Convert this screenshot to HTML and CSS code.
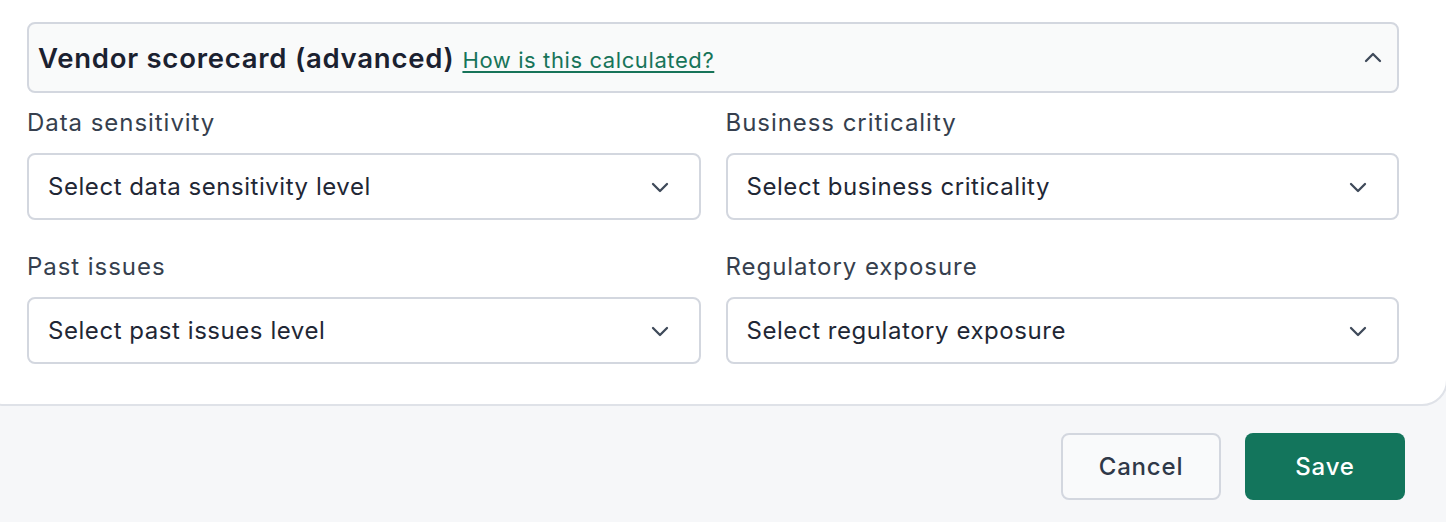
FILE: index.html
```html
<!DOCTYPE html>
<html lang="en">
<head>
<meta charset="utf-8">
<title>Vendor scorecard</title>
<link rel="stylesheet" href="styles.css">
</head>
<body>
<div class="page">
  <section class="card">
    <div class="accordion">
      <div class="acc-title">
        <span class="acc-heading">Vendor scorecard (advanced)</span>
        <a class="acc-link" href="#">How is this calculated?</a>
      </div>
      <svg class="chev" width="24" height="24" viewBox="0 0 24 24" fill="none" stroke="#3f4a5a" stroke-width="2.3" stroke-linecap="round" stroke-linejoin="round"><path d="M5 15l7-7 7 7"/></svg>
    </div>
    <div class="grid">
      <div class="field">
        <label class="label">Data sensitivity</label>
        <div class="select"><span>Select data sensitivity level</span>
          <svg class="chev" width="24" height="24" viewBox="0 0 24 24" fill="none" stroke="#3f4a5a" stroke-width="2.3" stroke-linecap="round" stroke-linejoin="round"><path d="M5 9l7 7 7-7"/></svg></div>
      </div>
      <div class="field">
        <label class="label">Business criticality</label>
        <div class="select"><span>Select business criticality</span>
          <svg class="chev" width="24" height="24" viewBox="0 0 24 24" fill="none" stroke="#3f4a5a" stroke-width="2.3" stroke-linecap="round" stroke-linejoin="round"><path d="M5 9l7 7 7-7"/></svg></div>
      </div>
      <div class="field">
        <label class="label">Past issues</label>
        <div class="select"><span>Select past issues level</span>
          <svg class="chev" width="24" height="24" viewBox="0 0 24 24" fill="none" stroke="#3f4a5a" stroke-width="2.3" stroke-linecap="round" stroke-linejoin="round"><path d="M5 9l7 7 7-7"/></svg></div>
      </div>
      <div class="field">
        <label class="label">Regulatory exposure</label>
        <div class="select"><span>Select regulatory exposure</span>
          <svg class="chev" width="24" height="24" viewBox="0 0 24 24" fill="none" stroke="#3f4a5a" stroke-width="2.3" stroke-linecap="round" stroke-linejoin="round"><path d="M5 9l7 7 7-7"/></svg></div>
      </div>
    </div>
  </section>
  <footer class="footer">
    <button class="btn btn-cancel">Cancel</button>
    <button class="btn btn-save">Save</button>
  </footer>
</div>
</body>
</html>
```
FILE: styles.css
```css
* { box-sizing: border-box; }
html, body { margin: 0; padding: 0; }
body {
  background: #f6f7f9;
  font-family: Inter, "Noto Sans", sans-serif;
  width: 1446px;
  height: 522px;
  overflow: hidden;
}
.page { width: 1446px; overflow: hidden; height: 522px; }
.card {
  background: #ffffff;
  border: 2px solid #dfe2e8;
  border-radius: 26px;
  margin: -40px 0 0 -22px;
  width: 1470px;
  padding: 60px 47px 40px 47px;
}
.accordion {
  height: 71px;
  background: #f9fafa;
  border: 2px solid #d3d7df;
  border-radius: 8px;
  display: flex;
  align-items: center;
  justify-content: space-between;
  padding: 0 12px 0 9px;
}
.acc-title { display: flex; align-items: baseline; gap: 8px; }
.acc-heading { font-size: 27.5px; font-weight: 600; color: #1b2130; letter-spacing: 0.75px; }
.acc-link { font-size: 22px; color: #177459; letter-spacing: 0.6px; text-decoration: underline; text-underline-offset: 3px; text-decoration-thickness: 1.5px; }
.grid {
  display: grid;
  grid-template-columns: 1fr 1fr;
  column-gap: 25px;
  row-gap: 29px;
  margin-top: 12px;
}
.field { display: flex; flex-direction: column; gap: 12px; }
.label { font-size: 24px; color: #363f4e; line-height: 36px; letter-spacing: 0.95px; }
.select {
  height: 67px;
  border: 2px solid #d3d7df;
  border-radius: 8px;
  background: #fff;
  display: flex;
  align-items: center;
  justify-content: space-between;
  padding: 0 27px 0 19px;
  font-size: 24px;
  letter-spacing: 0.55px;
  color: #1f2735;
}
.footer {
  display: flex;
  justify-content: flex-end;
  gap: 24px;
  padding: 27px 41px 0 0;
}
.btn {
  width: 160px;
  height: 67px;
  border-radius: 8px;
  font-family: Inter, "Noto Sans", sans-serif;
  font-size: 24px;
  font-weight: 500;
  letter-spacing: 0.8px;
}
.btn-cancel { background: #f9fafb; border: 2px solid #d3d7df; color: #2f3848; }
.btn-save { background: #13755c; border: 0; color: #ffffff; }
```
